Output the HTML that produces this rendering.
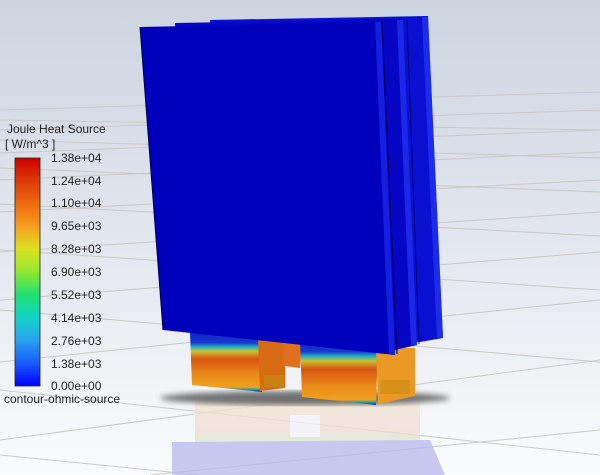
<!DOCTYPE html>
<html><head><style>
html,body{margin:0;padding:0;width:600px;height:475px;overflow:hidden}
svg{display:block}
text{font-family:"Liberation Sans",sans-serif;fill:#222}
</style></head><body>
<svg width="600" height="475" viewBox="0 0 600 475" xmlns="http://www.w3.org/2000/svg">
<defs>
<linearGradient id="bg" x1="0" y1="0" x2="0" y2="1">
<stop offset="0" stop-color="#ccd4e0"/><stop offset="0.5" stop-color="#e2e6ee"/><stop offset="1" stop-color="#fafbfc"/>
</linearGradient>
<linearGradient id="cb" x1="0" y1="1" x2="0" y2="0">
<stop offset="0" stop-color="#0000ff"/><stop offset="0.1" stop-color="#1a5cff"/><stop offset="0.2" stop-color="#2aa0f0"/>
<stop offset="0.3" stop-color="#12d2c8"/><stop offset="0.4" stop-color="#20e070"/><stop offset="0.5" stop-color="#90e830"/>
<stop offset="0.6" stop-color="#dce020"/><stop offset="0.7" stop-color="#f5a020"/><stop offset="0.8" stop-color="#ef6a10"/>
<stop offset="0.9" stop-color="#dc3a08"/><stop offset="1" stop-color="#cc0000"/>
</linearGradient>
<linearGradient id="tab" x1="0" y1="0" x2="0" y2="1">
<stop offset="0" stop-color="#1020c8"/><stop offset="0.18" stop-color="#1838d0"/><stop offset="0.25" stop-color="#20b0c0"/><stop offset="0.32" stop-color="#c8c030"/>
<stop offset="0.45" stop-color="#d85410"/><stop offset="0.7" stop-color="#e88a18"/><stop offset="0.92" stop-color="#f0a020"/><stop offset="0.96" stop-color="#20a0a0"/><stop offset="1" stop-color="#1020c0"/>
</linearGradient>
<linearGradient id="refl" x1="0" y1="0" x2="0" y2="1">
<stop offset="0" stop-color="#f2e4d0"/><stop offset="0.45" stop-color="#f2dcd4"/><stop offset="0.6" stop-color="#d4ecd0"/><stop offset="0.75" stop-color="#c4d0f0"/><stop offset="1" stop-color="#bcbcec"/>
</linearGradient>
<filter id="blur"><feGaussianBlur stdDeviation="3"/></filter>
</defs>
<rect width="600" height="475" fill="url(#bg)"/>
<g stroke="#c8c6c4" stroke-width="1" fill="none" opacity="0.9">
<path d="M0 110 L600 92"/><path d="M0 130 L600 110"/><path d="M0 153 L600 130"/><path d="M0 180 L600 152"/>
<path d="M0 212 L600 180"/><path d="M0 252 L600 212"/><path d="M0 300 L600 252"/><path d="M0 362 L600 300"/>
<path d="M0 440 L600 360"/><path d="M150 475 L600 430"/>
<path d="M0 120 L600 130"/><path d="M0 140 L600 158"/><path d="M0 168 L600 192"/><path d="M0 204 L600 236"/>
<path d="M0 250 L600 290"/><path d="M0 310 L600 362"/><path d="M0 390 L600 455"/><path d="M0 455 L200 475"/>
</g>
<!-- reflection -->
<g opacity="0.75">
<rect x="195" y="400" width="225" height="70" fill="url(#refl)"/>
<polygon points="172,442 430,440 445,475 172,475" fill="#b8b8ec"/>
<rect x="290" y="415" width="30" height="22" fill="#f4f4f8"/>
</g>
<!-- shadow -->
<ellipse cx="305" cy="398" rx="145" ry="7" fill="#444" filter="url(#blur)" opacity="0.75"/>
<!-- tabs -->
<polygon points="190,332 260,336 262,392 192,385" fill="url(#tab)"/>
<polygon points="258,338 285,340 285,388 260,391" fill="#d86a14"/>
<rect x="264" y="375" width="20" height="12" fill="#c88010"/>
<polygon points="282,340 302,342 300,368 284,366" fill="#e07020"/>
<polygon points="300,340 378,346 376,405 302,397" fill="url(#tab)"/>
<polygon points="376,348 415,348 415,396 378,404" fill="#e89a24"/>
<rect x="380" y="380" width="30" height="14" fill="#d8901a"/>
<!-- back panels -->
<polygon points="210,20 428,16 443,338 420,342 225,330" fill="#0a10d0"/>
<polygon points="175,23 403,19 417,345 395,350 190,332" fill="#0606c4"/>
<path d="M425 17 L440 338" stroke="#2a40ff" stroke-width="6" opacity="0.6"/>
<path d="M400 20 L414 345" stroke="#2a40ff" stroke-width="6" opacity="0.6"/>
<path d="M407 20 L419 344" stroke="#000070" stroke-width="1"/>
<!-- front panel -->
<polygon points="140,27 380,22 395,355 163,330" fill="#0000bc"/>
<path d="M378 22 L392 354" stroke="#1a30f0" stroke-width="6" opacity="0.7"/>
<path d="M382 22 L397 354" stroke="#000060" stroke-width="1.2"/>
<path d="M140 27 L163 330" stroke="#000050" stroke-width="1"/>
<!-- legend -->
<text x="7" y="133" font-size="12">Joule Heat Source</text>
<text x="5" y="148" font-size="12">[ W/m^3 ]</text>
<rect x="15" y="158" width="25" height="228" fill="url(#cb)" stroke="#222" stroke-width="0.8"/>
<g font-size="12">
<text x="51" y="162">1.38e+04</text><text x="51" y="185">1.24e+04</text><text x="51" y="207">1.10e+04</text>
<text x="51" y="230">9.65e+03</text><text x="51" y="253">8.28e+03</text><text x="51" y="276">6.90e+03</text>
<text x="51" y="299">5.52e+03</text><text x="51" y="322">4.14e+03</text><text x="51" y="345">2.76e+03</text>
<text x="51" y="368">1.38e+03</text><text x="51" y="390">0.00e+00</text>
<text x="4" y="403">contour-ohmic-source</text>
</g>
</svg>
</body></html>
